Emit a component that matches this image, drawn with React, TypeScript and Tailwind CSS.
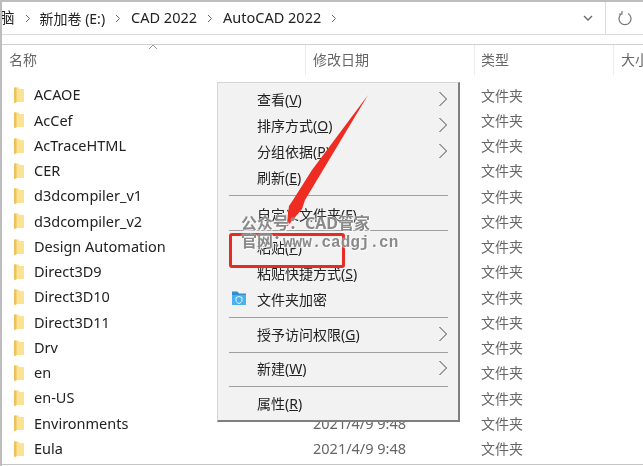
const rows = [
  "ACAOE",
  "AcCef",
  "AcTraceHTML",
  "CER",
  "d3dcompiler_v1",
  "d3dcompiler_v2",
  "Design Automation",
  "Direct3D9",
  "Direct3D10",
  "Direct3D11",
  "Drv",
  "en",
  "en-US",
  "Environments",
  "Eula",
]

const FolderIcon = () => (
  <svg width="12" height="18" viewBox="0 0 12 18">
    <path d="M1 1.500h4.500l1 1.500H11v13H1z" fill="#fce393" />
    <path d="M1 1.500h2.500v15L1 17z" fill="#edc25c" />
  </svg>
)

const Chevron = () => (
  <svg width="10" height="16" viewBox="0 0 10 16" fill="none" stroke="#444" strokeWidth="1">
    <path d="M1.500 1l7 7-7 7" />
  </svg>
)

const Crumb = () => (
  <svg className="mx-[10px]" width="6" height="9" viewBox="0 0 6 9" fill="none" stroke="#666" strokeWidth="1">
    <path d="M1 1l3.500 3.500L1 8" />
  </svg>
)

const Item = (props: { label: string; hotkey?: string; arrow?: boolean; icon?: boolean }) => (
  <div className="relative flex h-[26px] items-center justify-between pl-[39px] pr-[10px]">
    {props.icon && (
      <svg className="absolute left-[13px] top-[4px]" width="16" height="16" viewBox="0 0 16 16">
        <path d="M1 1.500h5.500L8 3.500h7V15H1z" fill="#2f8fd2" />
        <path d="M1 5h14v10H1z" fill="#4ab2ea" />
        <path d="M8 6.500l3 1v2.500c0 2-1.500 3-3 3.500-1.500-.5-3-1.500-3-3.500V7.500z" fill="none" stroke="#e4f4fc" strokeWidth="1" />
      </svg>
    )}
    <span className="text-[14px] text-[#222]">
      {props.label}
      {props.hotkey && (
        <>
          (<span className="underline">{props.hotkey}</span>)
        </>
      )}
    </span>
    {props.arrow && <Chevron />}
  </div>
)

const Sep = (props: { my: string }) => <div className={`ml-[11px] mr-[10px] h-px bg-[#a0a0a0] ${props.my}`} />

export default function App() {
  return (
    <div className="relative w-[643px] h-[466px] overflow-hidden bg-white border-t-2 border-l-2 border-[#bdbdbd] font-['Noto_Sans','Noto_Sans_CJK_SC',sans-serif] blur-[0.3px]">
      {/* address bar */}
      <div className="flex h-[33px] border-b border-[#dcdcdc]">
        <div className="flex flex-1 items-center text-[14.500px] text-[#222] -ml-[2px]">
          <span>脑</span>
          <Crumb />
          <span className="-ml-[1px] text-[14px]">新加卷 (E:)</span>
          <Crumb />
          <span>CAD 2022</span>
          <Crumb />
          <span>AutoCAD 2022</span>
          <Crumb />
          <svg className="ml-auto mr-[12px]" width="10" height="6" viewBox="0 0 10 6" fill="none" stroke="#666" strokeWidth="1.300">
            <path d="M1 1l4 4 4-4" />
          </svg>
        </div>
        <div className="flex w-[38px] items-center justify-center border-l border-[#dcdcdc]">
          <svg width="14" height="16" viewBox="0 0 14 16" fill="none" stroke="#777" strokeWidth="1.200">
            <path d="M4 3.500A6 6 0 1 0 10 3.500M4 1v3H1" />
          </svg>
        </div>
      </div>

      {/* column header */}
      <div className="relative mt-[9px] flex h-[31px] items-center border-t border-[#d0d0d0] text-[14px] text-[#666]">
        <svg className="absolute left-[146px] -top-px" width="10" height="6" viewBox="0 0 10 6" fill="none" stroke="#999" strokeWidth="1">
          <path d="M1 5l4-4 4 4" />
        </svg>
        <div className="-ml-[2px] flex h-full w-[306px] shrink-0 items-center border-r border-[#ececec] pb-[2px] pl-[9px]">名称</div>
        <div className="flex h-full w-[169px] shrink-0 items-center border-r border-[#ececec] pb-[2px] pl-[7px]">修改日期</div>
        <div className="flex h-full w-[139px] shrink-0 items-center border-r border-[#ececec] pb-[2px] pl-[6px]">类型</div>
        <div className="shrink-0 whitespace-nowrap pb-[2px] pl-[7px]">大小</div>
      </div>

      {/* file list */}
      <div className="mt-[7.500px]">
        {rows.map((r) => (
          <div key={r} className="flex h-[25.250px] items-center text-[14.500px]">
            <div className="-ml-[2px] flex w-[313px] items-center pl-[13px] text-[#222]">
              <FolderIcon />
              <span className="ml-[9px]">{r}</span>
            </div>
            <div className="w-[168px] text-[#666]">2021/4/9 9:48</div>
            <div className="text-[14px] text-[#666]">文件夹</div>
          </div>
        ))}
      </div>
      <div className="absolute left-0 right-0 top-[462px] h-px bg-[#c4c4c4]" />

      {/* context menu */}
      <div className="absolute left-[215px] top-[80px] h-[340px] w-[243px] border border-b-2 border-r-2 border-[#d6d6d6] border-b-[#7f7f7f] border-r-[#7f7f7f] bg-[#f2f2f2] pt-[3px]">
        <Item label="查看" hotkey="V" arrow />
        <Item label="排序方式" hotkey="O" arrow />
        <Item label="分组依据" hotkey="P" arrow />
        <Item label="刷新" hotkey="E" />
        <Sep my="mt-[5px] mb-[5px]" />
        <Item label="自定义文件夹" hotkey="F" />
        <Sep my="mt-[3px] mb-[3px]" />
        <Item label="粘贴" hotkey="P" />
        <Item label="粘贴快捷方式" hotkey="S" />
        <Item label="文件夹加密" icon />
        <Sep my="mt-[5px] mb-[3px]" />
        <Item label="授予访问权限" hotkey="G" arrow />
        <Sep my="mt-[5px] mb-[2px]" />
        <Item label="新建" hotkey="W" arrow />
        <Sep my="mt-[5px] mb-[3px]" />
        <Item label="属性" hotkey="R" />
      </div>

      {/* annotations */}
      <div className="absolute left-[227px] top-[231px] h-[35px] w-[116px] rounded-[3px] border-[3px] border-[#e62a24]" />
      <svg className="absolute left-[-2px] top-[-2px]" width="643" height="466" viewBox="0 0 643 466">
        <path d="M368 95 L323 170 L305 200 L302 209 L286 228 L289 206 L293 200 L312 170 Z" fill="#ee2c22" />
      </svg>
      <div className="absolute left-[239px] top-[211px] whitespace-nowrap text-[16px] font-bold leading-[20px] text-[#8a8a8a] [text-shadow:0_0_2px_#fff,1px_1px_1px_#fff]">
        <div>公众号：CAD管家</div>
        <div className="font-['Liberation_Mono','Noto_Sans_CJK_SC',monospace]">
          <span className="mr-[-6px]">官网：</span>www.cadgj.cn
        </div>
      </div>
    </div>
  )
}
